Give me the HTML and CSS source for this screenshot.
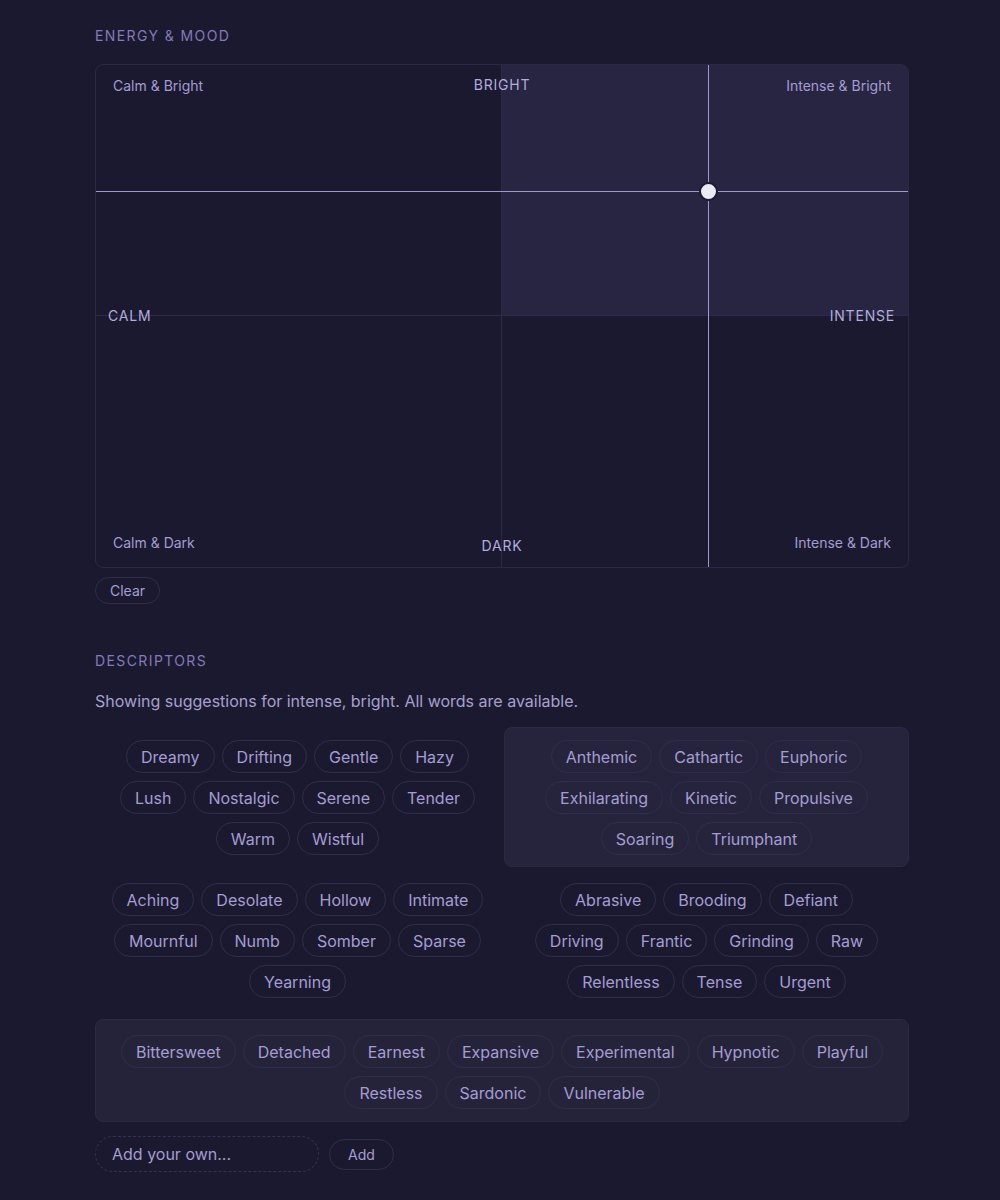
FILE: index.html
```html
<!DOCTYPE html>
<html lang="en">
<head>
    <meta charset="UTF-8">
    <title>Energy &amp; Mood</title>
    <link rel="stylesheet" href="styles.css">
</head>
<body>
    <div class="container">
        <h3 class="section-title">Energy &amp; Mood</h3>
        <div class="map">
            <div class="quad"></div>
            <div class="quad active"></div>
            <div class="quad"></div>
            <div class="quad"></div>

            <div class="line-v" style="left: 75.43%;"></div>
            <div class="line-h" style="top: 25%;"></div>
            <div class="dot" style="left: 75.43%; top: 25%;"></div>

            <span class="corner tl">Calm &amp; Bright</span>
            <span class="corner tr">Intense &amp; Bright</span>
            <span class="corner bl">Calm &amp; Dark</span>
            <span class="corner br">Intense &amp; Dark</span>
            <span class="axis top">Bright</span>
            <span class="axis bottom">Dark</span>
            <span class="axis left">Calm</span>
            <span class="axis right">Intense</span>
        </div>
        <button class="pill small clear">Clear</button>

        <h3 class="section-title descriptors">Descriptors</h3>
        <p class="hint">Showing suggestions for intense, bright. All words are available.</p>

        <div class="groups">
            <div class="group">
                <button class="pill">Dreamy</button>
                <button class="pill">Drifting</button>
                <button class="pill">Gentle</button>
                <button class="pill">Hazy</button>
                <button class="pill">Lush</button>
                <button class="pill">Nostalgic</button>
                <button class="pill">Serene</button>
                <button class="pill">Tender</button>
                <button class="pill">Warm</button>
                <button class="pill">Wistful</button>
            </div>
            <div class="group highlight">
                <button class="pill">Anthemic</button>
                <button class="pill">Cathartic</button>
                <button class="pill">Euphoric</button>
                <button class="pill">Exhilarating</button>
                <button class="pill">Kinetic</button>
                <button class="pill">Propulsive</button>
                <button class="pill">Soaring</button>
                <button class="pill">Triumphant</button>
            </div>
            <div class="group">
                <button class="pill">Aching</button>
                <button class="pill">Desolate</button>
                <button class="pill">Hollow</button>
                <button class="pill">Intimate</button>
                <button class="pill">Mournful</button>
                <button class="pill">Numb</button>
                <button class="pill">Somber</button>
                <button class="pill">Sparse</button>
                <button class="pill">Yearning</button>
            </div>
            <div class="group">
                <button class="pill">Abrasive</button>
                <button class="pill">Brooding</button>
                <button class="pill">Defiant</button>
                <button class="pill">Driving</button>
                <button class="pill">Frantic</button>
                <button class="pill">Grinding</button>
                <button class="pill">Raw</button>
                <button class="pill">Relentless</button>
                <button class="pill">Tense</button>
                <button class="pill">Urgent</button>
            </div>
        </div>

        <div class="group neutral">
            <button class="pill">Bittersweet</button>
            <button class="pill">Detached</button>
            <button class="pill">Earnest</button>
            <button class="pill">Expansive</button>
            <button class="pill">Experimental</button>
            <button class="pill">Hypnotic</button>
            <button class="pill">Playful</button>
            <button class="pill">Restless</button>
            <button class="pill">Sardonic</button>
            <button class="pill">Vulnerable</button>
        </div>

        <form class="add-row">
            <input type="text" class="add-input" placeholder="Add your own...">
            <button type="submit" class="pill small add">Add</button>
        </form>
    </div>
</body>
</html>
```

FILE: styles.css
```css
* {
    box-sizing: border-box;
}

body {
    margin: 0;
    background: #1b1930;
    font-family: 'Inter', 'DejaVu Sans', sans-serif;
    color: #a59dd2;
}

.container {
    width: 814px;
    margin: 0 0 0 95px;
    padding: 26px 0 30px;
}

.section-title {
    margin: 0 0 18px;
    font-size: 14px;
    font-weight: 400;
    line-height: 20px;
    letter-spacing: 1.4px;
    text-transform: uppercase;
    color: #837ab9;
}

.section-title.descriptors {
    margin-top: 47px;
    margin-bottom: 18px;
}

/* mood map */
.map {
    position: relative;
    height: 504px;
    display: grid;
    grid-template-columns: 1fr 1fr;
    grid-template-rows: 1fr 1fr;
    border: 1px solid #2a2843;
    border-radius: 8px;
    overflow: hidden;
}

.quad {
    border-right: 1px solid #2c2a46;
    border-bottom: 1px solid #2c2a46;
}

.quad:nth-child(2n) {
    border-right: none;
}

.quad:nth-child(n+3) {
    border-bottom: none;
}

.quad.active {
    background: #282542;
}

.line-v, .line-h {
    position: absolute;
    background: #9e98cf;
}

.line-v {
    top: 0;
    bottom: 0;
    width: 1px;
}

.line-h {
    left: 0;
    right: 0;
    height: 1px;
}

.dot {
    position: absolute;
    width: 19px;
    height: 19px;
    margin: -9px 0 0 -9px;
    border-radius: 50%;
    background: #ebe9f6;
    border: 2px solid #1d1a33;
}

.corner, .axis {
    position: absolute;
    font-size: 14px;
    line-height: 18px;
}

.corner {
    color: #a49cd2;
}

.corner.tl { top: 12px; left: 17px; }
.corner.tr { top: 12px; right: 17px; }
.corner.bl { bottom: 15px; left: 17px; }
.corner.br { bottom: 15px; right: 17px; }

.axis {
    text-transform: uppercase;
    letter-spacing: 0.8px;
    color: #b3acdf;
}

.axis.top {
    top: 11px;
    left: 50%;
    transform: translateX(-50%);
}

.axis.bottom {
    bottom: 12px;
    left: 50%;
    transform: translateX(-50%);
}

.axis.left {
    top: 50%;
    left: 12px;
    transform: translateY(-50%);
}

.axis.right {
    top: 50%;
    right: 13px;
    transform: translateY(-50%);
}

/* pills */
.pill {
    height: 33px;
    padding: 0 14px;
    border: 1px solid #302d4b;
    border-radius: 999px;
    background: transparent;
    color: #a59dd2;
    font-family: inherit;
    font-size: 16px;
    cursor: pointer;
}

.pill:hover {
    border-color: #4a4570;
}

.pill.small {
    height: 27px;
    padding: 0 14px;
    font-size: 14px;
}

.clear {
    margin-top: 9px;
}

.hint {
    margin: 0 0 14px;
    font-size: 16px;
    line-height: 24px;
    color: #a7a0cd;
}

.groups {
    display: grid;
    grid-template-columns: 1fr 1fr;
    gap: 3px 4px;
}

.group {
    display: flex;
    flex-wrap: wrap;
    justify-content: center;
    align-content: flex-start;
    gap: 8px 7px;
    padding: 13px 16px 12px;
    border-radius: 8px;
}

.group.highlight {
    padding: 12px 15px 11px;
    background: #26243c;
    border: 1px solid #2b2944;
}

.group.neutral {
    margin-top: 9px;
    padding: 15px 20px 12px;
    background: #25233a;
    border: 1px solid #2b2944;
}

.add-row {
    display: flex;
    align-items: center;
    gap: 10px;
    margin-top: 14px;
}

.add-input {
    width: 224px;
    height: 36px;
    padding: 0 16px;
    border: 1px dashed #35324f;
    border-radius: 999px;
    background: transparent;
    color: #a59dd2;
    font-family: inherit;
    font-size: 16px;
    outline: none;
}

.add-input::placeholder {
    color: #a49cd0;
}

.pill.small.add {
    height: 31px;
    padding: 0 18px;
}
```
